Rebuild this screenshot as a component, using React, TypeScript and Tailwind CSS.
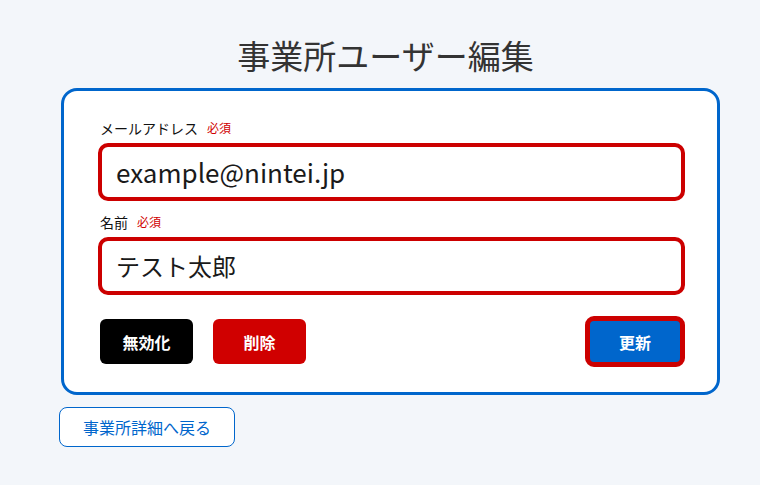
const font = { fontFamily: '"Noto Sans CJK JP", "Noto Sans", sans-serif' };

function Field({ label, value, size }: { label: string; value: string; size: string }) {
  return (
    <div>
      <div className="ml-[2px] flex items-center h-5 leading-5">
        <span className="text-[14px] text-[#111]">{label}</span>
        <span className="ml-[9px] text-[12px] text-[#d00000]">必須</span>
      </div>
      <div className="mt-[5px] h-[58px] flex items-center rounded-[10px] border-4 border-[#cc0000] bg-white pl-[14px]">
        <span className={`${size} text-[#1a1a1a] leading-none`}>{value}</span>
      </div>
    </div>
  );
}

export default function App() {
  return (
    <div className="min-h-[485px] w-[760px] bg-[#f3f6fa]" style={font}>
      <div className="ml-[59px] w-[661px] pt-[33px]">
        <h1 className="text-center text-[33px] leading-[44px] text-[#333] pr-[8px]">
          事業所ユーザー編集
        </h1>
        <div className="mt-[11px] ml-[2px] rounded-[16px] border-[3px] border-[#0066cc] bg-white pt-[27px] pb-[25px] pl-[34px] pr-[32px]">
          <Field label="メールアドレス" value="example@nintei.jp" size="text-[26px]" />
          <div className="mt-[11px]">
            <Field label="名前" value="テスト太郎" size="text-[24px]" />
          </div>
          <div className="mt-[21px] flex items-center">
            <button className="ml-[2px] h-[45px] w-[93px] rounded-[6px] bg-black text-[16px] font-bold text-white">
              無効化
            </button>
            <button className="ml-[20px] h-[45px] w-[93px] rounded-[6px] bg-[#d00000] text-[16px] font-bold text-white">
              削除
            </button>
            <button className="ml-auto h-[51px] w-[100px] rounded-[9px] border-[5px] border-[#cc0000] bg-[#0066cc] text-[16px] font-bold text-white">
              更新
            </button>
          </div>
        </div>
        <button className="mt-[12px] h-[40px] w-[176px] rounded-[8px] border border-[#0066cc] bg-white text-[16px] text-[#0066cc]">
          事業所詳細へ戻る
        </button>
      </div>
    </div>
  );
}
